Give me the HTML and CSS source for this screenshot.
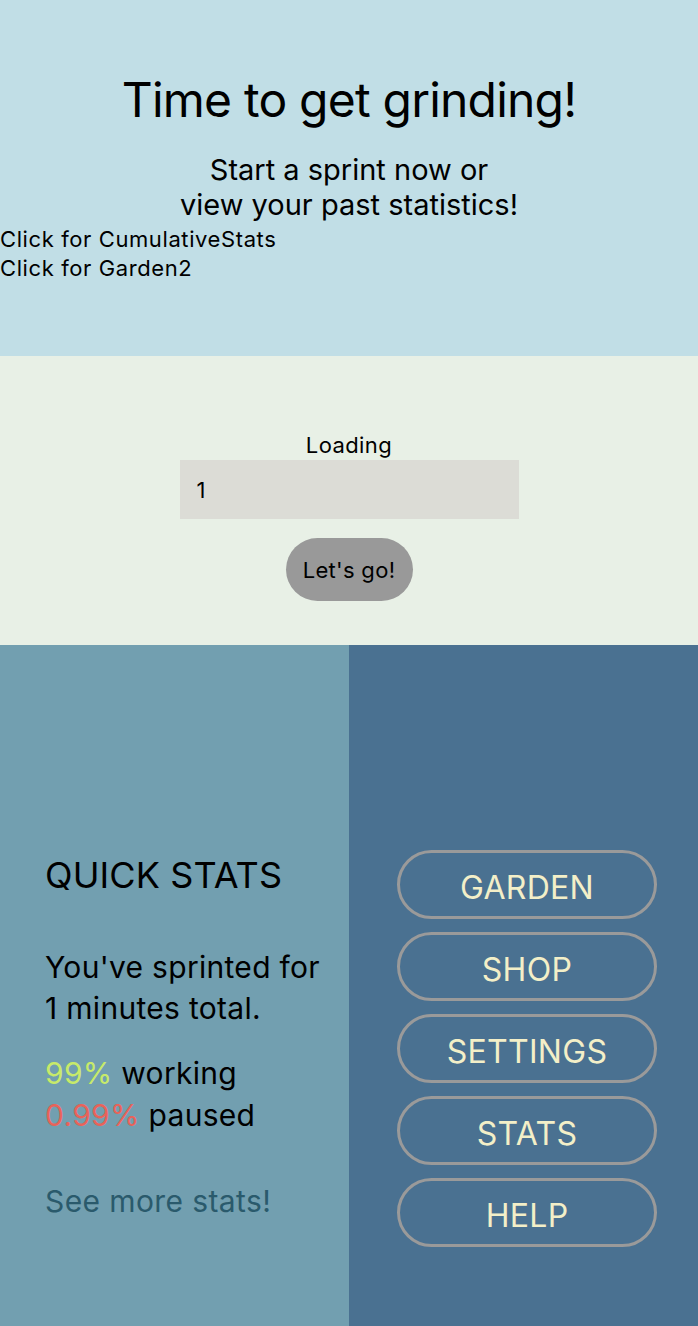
FILE: index.html
```html
<!DOCTYPE html>
<html>
<head>
<meta charset="utf-8">
<link rel="stylesheet" href="styles.css">
</head>
<body>
<div class="screen">
  <section class="hero">
    <h1 class="title">Time to get grinding!</h1>
    <p class="subtitle">Start a sprint now or<br>view your past statistics!</p>
    <div class="links">
      <div class="link">Click for CumulativeStats</div>
      <div class="link">Click for Garden2</div>
    </div>
  </section>
  <section class="sprint">
    <div class="loading">Loading</div>
    <div class="input">1</div>
    <div class="go">Let's go!</div>
  </section>
  <section class="bottom">
    <div class="stats">
      <h2 class="stats-title">QUICK STATS</h2>
      <p class="total">You've sprinted for<br>1 minutes total.</p>
      <p class="ratio"><span class="green">99%</span> working<br><span class="red">0.99%</span> paused</p>
      <div class="more">See more stats!</div>
    </div>
    <div class="menu">
      <div class="pill">GARDEN</div>
      <div class="pill">SHOP</div>
      <div class="pill">SETTINGS</div>
      <div class="pill">STATS</div>
      <div class="pill">HELP</div>
    </div>
  </section>
</div>
</body>
</html>
```

FILE: styles.css
```css
* { box-sizing: border-box; }
html, body { margin: 0; padding: 0; background: #1a1a1a; }
body { font-family: Inter, "Noto Sans", sans-serif; color: #000; }
.screen { width: 698px; height: 1326px; display: flex; flex-direction: column; overflow: hidden; }
.hero { background: #c1dee6; height: 356px; padding-top: 72px; }
.title { margin: 0; text-align: center; font-weight: 400; font-size: 48px; line-height: 56px; letter-spacing: -0.8px; }
.subtitle { margin: 24px 0 0; text-align: center; font-size: 29px; line-height: 35px; letter-spacing: 0; }
.links { font-size: 22px; line-height: 29px; letter-spacing: 0.6px; margin-top: 3px; }
.sprint { background: #e8f0e6; height: 289px; display: flex; flex-direction: column; align-items: center; padding-top: 74px; }
.loading { font-size: 22px; line-height: 30px; letter-spacing: 0.4px; }
.input { width: 339px; height: 59px; background: #dcdcd6; font-size: 22px; display: flex; align-items: center; padding-left: 17px; }
.go { margin-top: 19px; width: 127px; height: 63px; border-radius: 32px; background: #999999; font-size: 22px; letter-spacing: 0.3px; display: flex; align-items: center; justify-content: center; }
.bottom { flex: 1; display: flex; }
.stats { width: 349px; background: #729fb0; padding: 208px 0 0 45px; }
.stats-title { margin: 0; font-weight: 400; font-size: 36px; line-height: 44px; letter-spacing: 0.1px; }
.total { margin: 50px 0 0; font-size: 30px; line-height: 41px; letter-spacing: 0.3px; }
.ratio { margin: 23px 0 0; font-size: 30px; line-height: 42px; letter-spacing: 0.3px; }
.green { color: #c7ea6a; }
.red { color: #e8635a; }
.more { margin-top: 45px; font-size: 30px; line-height: 41px; letter-spacing: 0.4px; color: #2a5a6c; }
.menu { flex: 1; background: #4a7191; padding: 205px 0 0 48px; display: flex; flex-direction: column; gap: 13px; }
.pill { width: 260px; height: 69px; border: 3px solid #9a9a9a; border-radius: 35px; color: #f3efc8; font-size: 32px; letter-spacing: 0.3px; padding-top: 6px; display: flex; align-items: center; justify-content: center; }
```
